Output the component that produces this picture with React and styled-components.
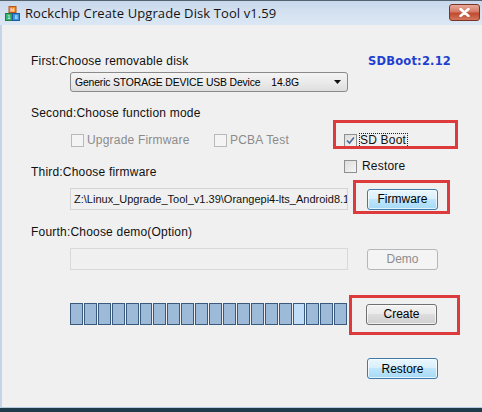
import styled, { createGlobalStyle } from "styled-components";

const GlobalStyle = createGlobalStyle`
  html, body {
    margin: 0;
    padding: 0;
    background: #f0f0f0;
  }
  body {
    font-family: "Liberation Sans", Arial, sans-serif;
  }
`;

const Window = styled.div`
  width: 482px;
  height: 412px;
  box-sizing: border-box;
  display: flex;
  flex-direction: column;
  background: #f0f0f0;
  border-bottom: 4px solid #1f3c4c;
  overflow: hidden;
`;

const TitleBar = styled.div`
  height: 25px;
  flex: none;
  box-sizing: border-box;
  display: flex;
  align-items: center;
  gap: 5px;
  padding: 0 2px 0 5px;
  border-top: 1px solid #54636f;
  background: linear-gradient(#c8d8eb, #d5e2f1 55%, #dbe7f4);
`;

const Title = styled.span`
  flex: 1;
  font-family: "Open Sans", "Noto Sans", sans-serif;
  font-size: 13px;
  color: #141414;
  letter-spacing: 0.1px;
`;

const CloseButton = styled.div`
  width: 31px;
  height: 17px;
  margin-top: -2px;
  box-sizing: border-box;
  display: flex;
  align-items: center;
  justify-content: center;
  border: 1px solid #7a3226;
  border-radius: 3px;
  background: linear-gradient(#e9a999, #d27b66 45%, #c04a30 55%, #d0765c);
`;

const Client = styled.div`
  flex: 1;
  box-sizing: border-box;
  display: flex;
  flex-direction: column;
  padding-left: 29px;
  border-left: 2px solid #c4d5e9;
  border-bottom: 1px solid #b3cbe2;
`;

const Label = styled.div`
  font-size: 12px;
  line-height: 14px;
  height: 14px;
  color: #111;
  letter-spacing: 0.2px;
  white-space: nowrap;
  margin-top: ${(p) => p.$top || 0}px;
`;

const SplitRow = styled.div`
  display: grid;
  grid-template-columns: ${(p) => p.$split}px auto;
  align-items: start;
  margin-top: ${(p) => p.$top || 0}px;
`;

const Version = styled.div`
  font-family: "DejaVu Sans", Verdana, sans-serif;
  font-weight: bold;
  font-size: 11.5px;
  line-height: 14px;
  color: #1f3fd0;
  letter-spacing: 0.2px;
`;

const FieldRow = styled.div`
  display: flex;
  align-items: center;
  gap: 19px;
  padding-left: 39px;
  margin-top: ${(p) => p.$top || 0}px;
`;

const Select = styled.div`
  width: 278px;
  height: 20px;
  box-sizing: border-box;
  display: flex;
  align-items: center;
  justify-content: space-between;
  padding: 0 6px 0 4px;
  border: 1px solid #8a8a8a;
  border-radius: 3px;
  background: linear-gradient(#f4f4f4, #ebebeb 50%, #dedede);
  font-size: 10.4px;
  letter-spacing: -0.15px;
  color: #000;
  white-space: pre;
`;

const TextField = styled.div`
  width: 278px;
  height: 22px;
  box-sizing: border-box;
  display: flex;
  align-items: center;
  padding-left: 3px;
  border: 1px solid ${(p) => (p.$disabled ? "#d9d9d9" : "#d4d4d4")};
  background: #f0f0f0;
  font-size: 11px;
  color: #111;
  white-space: nowrap;
  overflow: hidden;
`;

const Button = styled.div`
  width: 71px;
  height: 21px;
  box-sizing: border-box;
  display: flex;
  align-items: center;
  justify-content: center;
  border-radius: 3px;
  font-size: 12px;
  border: 1px solid
    ${(p) => (p.$variant === "blue" ? "#3d7bad" : p.$variant === "off" ? "#b4b8bb" : "#707070")};
  color: ${(p) => (p.$variant === "off" ? "#8d8d8d" : "#000")};
  background: ${(p) =>
    p.$variant === "blue"
      ? "linear-gradient(#eaf6fd, #d9f0fc 45%, #bee6fd 50%, #a7d9f5)"
      : p.$variant === "off"
      ? "#f4f4f4"
      : "linear-gradient(#f2f2f2, #ebebeb 45%, #dddddd 50%, #cfcfcf)"};
  box-shadow: ${(p) => (p.$variant === "off" ? "none" : "inset 0 0 0 1px rgba(255,255,255,0.7)")};
`;

const Marked = styled.div`
  position: relative;
  &::after {
    content: "";
    position: absolute;
    top: ${(p) => -p.$t}px;
    left: ${(p) => -p.$l}px;
    right: ${(p) => -p.$r}px;
    bottom: ${(p) => -p.$b}px;
    border: 3px solid #dd3b3b;
    pointer-events: none;
  }
`;

const CheckRow = styled.div`
  display: grid;
  grid-template-columns: 143px 130px auto;
  padding-left: 40px;
  margin-top: ${(p) => p.$top || 0}px;
`;

const CheckItem = styled.div`
  display: flex;
  align-items: center;
  gap: ${(p) => p.$gap || 3}px;
  height: 14px;
  font-size: 12px;
  letter-spacing: 0.2px;
  color: ${(p) => (p.$disabled ? "#8b8b8b" : "#111")};
`;

const Box = styled.span`
  width: 13px;
  height: 13px;
  box-sizing: border-box;
  flex: none;
  display: flex;
  align-items: center;
  justify-content: center;
  border: 1px solid ${(p) => (p.$disabled ? "#b9b9b9" : "#8e8f8f")};
  background: ${(p) =>
    p.$disabled ? "#f4f4f4" : "linear-gradient(135deg, #dcdcdc, #f6f6f6)"};
`;

const FocusText = styled.span`
  outline: 1px dotted #222;
  outline-offset: 0;
  line-height: 13px;
  padding-right: 1px;
`;

const Progress = styled.div`
  width: 277px;
  height: 22px;
  display: flex;
  gap: 1px;
`;

const Block = styled.div`
  flex: 1;
  box-sizing: border-box;
  border: 1px solid #3a5a7e;
  background: ${(p) => (p.$light ? "#c2ddf8" : "#9dbad9")};
`;

const RightAligned = styled.div`
  padding-left: 336px;
  margin-top: ${(p) => p.$top || 0}px;
`;

const AppIcon = () => (
  <svg width="15" height="15" viewBox="0 0 15 15">
    <rect x="4" y="0.5" width="7" height="6" fill="#f08a2a" stroke="#b2561a" />
    <text x="7.5" y="5.6" fontSize="5" fontFamily="DejaVu Sans" fill="#fff" textAnchor="middle">M</text>
    <rect x="0.5" y="7.5" width="6.5" height="7" fill="#3cb36a" stroke="#247a44" />
    <rect x="7.5" y="7.5" width="7" height="7" fill="#3a8fe0" stroke="#1d5da0" />
    <text x="3.8" y="13" fontSize="5" fontFamily="DejaVu Sans" fill="#fff" textAnchor="middle">1</text>
    <text x="11" y="13" fontSize="5" fontFamily="DejaVu Sans" fill="#fff" textAnchor="middle">8</text>
  </svg>
);

const CloseIcon = () => (
  <svg width="11" height="9" viewBox="0 0 11 9">
    <path d="M1.5 1 L9.5 8 M9.5 1 L1.5 8" stroke="#fff" strokeWidth="2.4" strokeLinecap="round" />
  </svg>
);

const Arrow = () => (
  <svg width="7" height="4" viewBox="0 0 7 4">
    <path d="M0 0 H7 L3.5 4 Z" fill="#111" />
  </svg>
);

const Tick = () => (
  <svg width="9" height="9" viewBox="0 0 9 9">
    <path d="M1 4.5 L3.5 7 L8 1.5" fill="none" stroke="#4a6b98" strokeWidth="1.6" />
  </svg>
);

const Check = ({ label, disabled, checked, focus, gap }) => (
  <CheckItem $disabled={disabled} $gap={gap}>
    <Box $disabled={disabled}>{checked && <Tick />}</Box>
    {focus ? <FocusText>{label}</FocusText> : <span>{label}</span>}
  </CheckItem>
);

const blocks = Array.from({ length: 20 }, (_, i) => i === 16);

export default function App() {
  return (
    <>
      <GlobalStyle />
      <Window>
        <TitleBar>
          <AppIcon />
          <Title>Rockchip Create Upgrade Disk Tool v1.59</Title>
          <CloseButton>
            <CloseIcon />
          </CloseButton>
        </TitleBar>
        <Client>
          <SplitRow $split={337} $top={29}>
            <Label>First:Choose removable disk</Label>
            <Version>SDBoot:2.12</Version>
          </SplitRow>
          <FieldRow $top={4}>
            <Select>
              <span>{"Generic STORAGE DEVICE USB Device    14.8G"}</span>
              <Arrow />
            </Select>
          </FieldRow>
          <Label $top={14}>Second:Choose function mode</Label>
          <CheckRow $top={13}>
            <Check label="Upgrade Firmware" disabled />
            <Check label="PCBA Test" disabled />
            <Marked $t={13} $l={11} $r={-24} $b={2}>
              <Check label="SD Boot" checked focus />
            </Marked>
          </CheckRow>
          <SplitRow $split={313} $top={12}>
            <Label $top={6}>Third:Choose firmware</Label>
            <Check label="Restore" gap={5} />
          </SplitRow>
          <FieldRow $top={9}>
            <TextField>Z:\Linux_Upgrade_Tool_v1.39\Orangepi4-lts_Android8.1</TextField>
            <Marked $t={9} $l={14} $r={12} $b={4}>
              <Button $variant="blue">Firmware</Button>
            </Marked>
          </FieldRow>
          <Label $top={15}>Fourth:Choose demo(Option)</Label>
          <FieldRow $top={9}>
            <TextField $disabled />
            <Button $variant="off">Demo</Button>
          </FieldRow>
          <FieldRow $top={33}>
            <Progress>
              {blocks.map((light, i) => (
                <Block key={i} $light={light} />
              ))}
            </Progress>
            <Marked $t={9} $l={17} $r={23} $b={10}>
              <Button>Create</Button>
            </Marked>
          </FieldRow>
          <RightAligned $top={33}>
            <Button $variant="blue">Restore</Button>
          </RightAligned>
        </Client>
      </Window>
    </>
  );
}
